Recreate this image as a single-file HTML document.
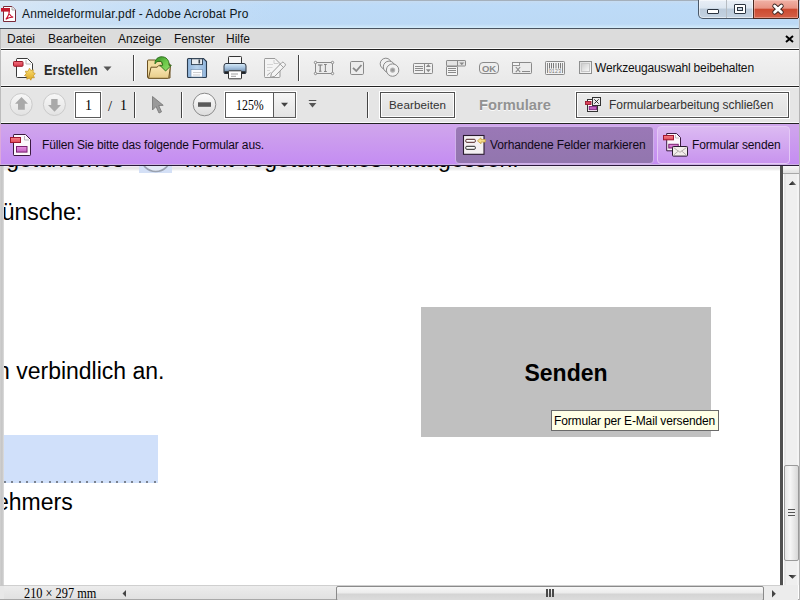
<!DOCTYPE html>
<html><head><meta charset="utf-8">
<style>
*{margin:0;padding:0;box-sizing:border-box}
html,body{width:800px;height:600px;overflow:hidden;background:#fff;font-family:"Liberation Sans",sans-serif}
.a{position:absolute}
svg.a{overflow:visible}
#title{left:0;top:0;width:800px;height:29px;background:linear-gradient(90deg,rgba(232,238,244,0.6) 0%,rgba(232,238,244,0.25) 15%,rgba(232,238,244,0) 35%),linear-gradient(#c6dcf2 0px,#bddbf8 4px,#bcd9f5 23px,#d4ecfb 27px,#c0d8ee 28px);border-top:1px solid #a4b0bc}
#titletxt{left:22px;top:7px;font-size:12px;color:#101820;letter-spacing:0.13px;white-space:nowrap}
#menu{left:0;top:28px;width:800px;height:22px;background:#dcdcdc;border-top:1px solid #4a5460;border-bottom:1px solid #222;box-shadow:inset 0 -1px 0 #fafafa}
.mi{top:32px;font-size:12px;color:#111;white-space:nowrap}
#tb1{left:0;top:50px;width:800px;height:37px;background:linear-gradient(#f2f2f2,#e8e8e8);border-top:1px solid #fcfcfc;border-bottom:1px solid #222;box-shadow:inset 0 -1px 0 #fafafa}
#tb2{left:0;top:87px;width:800px;height:37px;background:#e5e5e5;border-top:1px solid #fafafa;border-bottom:1px solid #222;box-shadow:inset 0 -1px 0 #fafafa}
.sep{width:2px;background:#444;border-right:1px solid #fff}
#purple{left:0;top:124px;width:800px;height:42px;background:linear-gradient(#d0a6ec,#c48cf2);border-bottom:1px solid #2a1a3a}
#doc{left:0;top:166px;width:780px;height:419px;background:linear-gradient(#f2eaf4 0 1px,#e8e8e8 1px 3px,#eeeeee 3px 4px,#f8f8f8 4px 5px,#fff 5px);overflow:hidden}
.dt{font-size:23px;color:#000;white-space:nowrap;line-height:23px}
#status{left:0;top:585px;width:783px;height:15px;background:#e8e8e8;border-top:1px solid #c8c8c8}
.ui{font-size:12px;color:#111;white-space:nowrap;line-height:14px}
</style></head><body>

<!-- Doc -->
<div id="doc" class="a"></div>
<!-- top line partly hidden -->
<div class="a dt" style="left:-18px;top:148px">vegetarisches</div>
<div class="a" style="left:139px;top:139px;width:33px;height:34px;background:#d4e0f6"></div>
<svg class="a" style="left:139px;top:139px" width="33" height="34" viewBox="139 139 33 34"><circle cx="155.8" cy="156.5" r="15" fill="#e2e9f6" stroke="#9aa2b0" stroke-width="1.6"/></svg>
<div class="a dt" style="left:185px;top:148px">nicht vegetarisches Mittagessen.</div>
<div class="a dt" style="left:-20px;top:201px">Wünsche:</div>
<div class="a dt" style="left:-3px;top:360px">n verbindlich an.</div>
<div class="a" style="left:4px;top:435px;width:154px;height:48px;background:#d0e0fa"></div><div class="a" style="left:4px;top:481px;width:154px;height:2px;background:repeating-linear-gradient(90deg,#7a8290 0 2px,transparent 2px 7.5px)"></div>
<div class="a dt" style="left:-4px;top:491px">ehmers</div>
<!-- Senden button -->
<div class="a" style="left:421px;top:307px;width:290px;height:130px;background:#c0c0c0"></div>
<div class="a" style="left:421px;top:361px;width:290px;text-align:center;font-size:23px;font-weight:bold;line-height:24px;color:#000">Senden</div>
<!-- tooltip -->
<div class="a" style="left:551px;top:410px;width:168px;height:21px;background:#ffffe6;border:1px solid #6a6a6a"></div>
<div class="a ui" style="left:554px;top:414px;letter-spacing:-0.15px;color:#000">Formular per E-Mail versenden</div>
<!-- left grey strip -->
<div class="a" style="left:0;top:165px;width:4px;height:435px;background:linear-gradient(90deg,#d0d0d0,#c4c4c4 50%,#dedede)"></div>
<!-- dark vertical line -->
<div class="a" style="left:780px;top:165px;width:3px;height:420px;background:#505050"></div>
<!-- vertical scrollbar -->
<div class="a" style="left:783px;top:165px;width:16px;height:420px;background:linear-gradient(90deg,#fff 0 1px,#e6e6e6 1px 3px,#efefef 3px 14px,#f4f4f4 14px)"></div>
<div class="a" style="left:783px;top:165px;width:16px;height:9px;background:linear-gradient(#fafafa,#e2e2e2);border-bottom:1px solid #a8a8a8"></div>
<svg class="a" style="left:788px;top:180px" width="9" height="6" viewBox="0 0 9 6"><defs><linearGradient id="garr" x1="0" y1="0" x2="1" y2="0"><stop offset="0" stop-color="#111"/><stop offset="1" stop-color="#777"/></linearGradient></defs><path d="M0.8 4.9 L4.5 1 L8.2 4.9 Z" fill="url(#garr)"/></svg>
<div class="a" style="left:784px;top:465px;width:15px;height:96px;border:1px solid #9a9a9a;border-radius:2px;background:linear-gradient(90deg,#e6e6e6,#f6f6f6 40%,#d8d8d8)"></div>
<div class="a" style="left:788px;top:509px;width:7px;height:8px;background:repeating-linear-gradient(#555 0 1px,#eee 1px 3px)"></div>
<svg class="a" style="left:788px;top:574px" width="9" height="6" viewBox="0 0 9 6"><path d="M0.5 1 L4.5 4.8 L8.5 1 Z" fill="url(#garr)"/></svg>


<!-- Title bar -->
<div id="title" class="a"></div>
<svg class="a" style="left:0;top:4px" width="20" height="20" viewBox="0 4 20 20">
  <path d="M3.5 6.5 H12 L15.5 10 V21.5 H3.5 Z" fill="#fff" stroke="#7a2a3a" stroke-width="1"/>
  <path d="M12 6.5 V10 H15.5" fill="#eee" stroke="#999" stroke-width="0.8"/>
  <rect x="1" y="8" width="9" height="3.6" fill="#c41a2e"/>
  <path d="M5.8 19.3 C8 17 9.6 13 9.2 11.4 C8.3 12.5 9.8 16 13.2 17.3 C10.5 16.8 7.5 18.2 5.8 19.3 Z" fill="none" stroke="#c8102e" stroke-width="1.1"/>
</svg>
<div id="titletxt" class="a">Anmeldeformular.pdf - Adobe Acrobat Pro</div>

<!-- window buttons -->
<div class="a" style="left:698px;top:0;width:56px;height:19px;border:1px solid #4a5868;border-top:none;border-radius:0 0 0 5px;background:linear-gradient(#e8eef6 0%,#dce6f0 45%,#bccbdb 50%,#c4d3e2 100%);box-shadow:inset 0 0 0 1px rgba(255,255,255,0.5)"></div>
<div class="a" style="left:726px;top:0;width:1px;height:18px;background:#4a5868;border-right:1px solid rgba(255,255,255,0.6)"></div>
<div class="a" style="left:753px;top:0;width:46px;height:19px;border:1px solid #4a2a22;border-top:none;background:linear-gradient(#f0b2a6 0%,#e89484 45%,#cc4a30 52%,#d46048 100%);box-shadow:inset 0 0 0 1px rgba(255,220,210,0.4)"></div>
<div class="a" style="left:707px;top:9px;width:12px;height:5px;background:#fff;border:1px solid #2a3440;border-radius:1px"></div>
<div class="a" style="left:734px;top:4px;width:12px;height:10px;border:1px solid #2a3440;background:#fff;border-radius:1px"></div>
<div class="a" style="left:737px;top:7px;width:6px;height:4px;border:1px solid #2a3440;background:#c8d4e0"></div>
<svg class="a" style="left:768px;top:1px" width="18" height="16" viewBox="768 1 18 16">
  <path d="M774.6 6 L781.4 12.2 M781.4 6 L774.6 12.2" stroke="#3a2420" stroke-width="4.6" stroke-linecap="round"/>
  <path d="M774.6 6 L781.4 12.2 M781.4 6 L774.6 12.2" stroke="#fff" stroke-width="2.8" stroke-linecap="round"/>
</svg>
<!-- Menu -->
<div id="menu" class="a"></div>
<div class="a mi" style="left:7px">Datei</div>
<div class="a mi" style="left:48px">Bearbeiten</div>
<div class="a mi" style="left:118px">Anzeige</div>
<div class="a mi" style="left:174px">Fenster</div>
<div class="a mi" style="left:226px">Hilfe</div>
<svg class="a" style="left:785px;top:35px" width="9" height="8" viewBox="0 0 9 8"><path d="M1 1 L8 7 M8 1 L1 7" stroke="#000" stroke-width="2"/></svg>

<!-- Toolbar 1 -->
<div id="tb1" class="a"></div>
<!-- Erstellen icon -->
<svg class="a" style="left:0;top:50px" width="40" height="36" viewBox="0 50 40 36">
  <defs>
    <linearGradient id="gstar" x1="0" y1="0" x2="0" y2="1"><stop offset="0" stop-color="#fbe27a"/><stop offset="1" stop-color="#e0a820"/></linearGradient>
    <linearGradient id="gred" x1="0" y1="0" x2="0" y2="1"><stop offset="0" stop-color="#f07080"/><stop offset="1" stop-color="#d83848"/></linearGradient>
  </defs>
  <path d="M17 58.5 H27.5 L32.5 63.5 V76.5 Q32.5 77.5 31.5 77.5 H17.5 Q16.5 77.5 16.5 76.5 V59.5 Q16.5 58.5 17.5 58.5 Z" fill="#fff" stroke="#3a3a3a" stroke-width="1"/>
  <path d="M26 60 V64 H31" fill="none" stroke="#aaa" stroke-width="0.8"/>
  <rect x="13.5" y="61.5" width="9.5" height="4.8" rx="0.8" fill="url(#gred)" stroke="#9a1828" stroke-width="1"/>
  <path d="M29.5 68.2 L30.8 70.5 L33.3 69.8 L33 72.4 L35.3 73.6 L33.4 75.4 L34.4 77.8 L31.8 77.8 L30.8 80.2 L29.3 78.1 L26.8 79.2 L26.9 76.6 L24.5 75.5 L26.3 73.7 L25.4 71.2 L28 71.3 Z" fill="url(#gstar)" stroke="#c09020" stroke-width="0.7"/>
</svg>
<div class="a" style="left:44px;top:63px;font-size:14px;font-weight:bold;color:#2a2a2a;line-height:14px;transform:scaleX(0.91);transform-origin:0 0">Erstellen</div>
<svg class="a" style="left:103px;top:66px" width="9" height="6" viewBox="0 0 9 6"><path d="M0.5 0.5 H8.5 L4.5 5 Z" fill="#555"/></svg>
<div class="a sep" style="left:133px;top:55px;height:26px"></div>

<!-- Open folder -->
<svg class="a" style="left:140px;top:50px" width="40" height="36" viewBox="140 50 40 36">
  <defs>
    <linearGradient id="gfold" x1="0" y1="0" x2="0" y2="1"><stop offset="0" stop-color="#fbe9b8"/><stop offset="1" stop-color="#e8cd8a"/></linearGradient>
    <linearGradient id="ggreen" x1="0" y1="0" x2="1" y2="1"><stop offset="0" stop-color="#2e8a22"/><stop offset="0.5" stop-color="#6cc848"/><stop offset="1" stop-color="#9ae070"/></linearGradient>
  </defs>
  <path d="M147.5 61 Q147.5 60 148.5 60 H155 L157 61.5 H162 V64 H170 V78 H148.5 Q147.5 78 147.5 77 Z" fill="#f2dca0" stroke="#6a5020" stroke-width="1"/>
  <path d="M151 67.2 H157 L158.5 65.8 H170.5 L168.8 77.5 Q168.6 78.3 167.8 78.3 H148.5 Z" fill="url(#gfold)" stroke="#6a5020" stroke-width="1"/>
  <path d="M155 63.8 C154.5 57.5 161.5 55 166 58 C168.5 60 169.3 62.5 169 65.3 L171.3 65.3 L165.6 71 L159.8 65.3 L162.6 65.3 C162.8 62.5 161.5 61 159 61.2 C157.2 61.4 155.8 62.4 155 63.8 Z" fill="url(#ggreen)" stroke="#2a6a1a" stroke-width="0.9"/>
</svg>

<!-- Save -->
<svg class="a" style="left:180px;top:50px" width="36" height="36" viewBox="180 50 36 36">
  <defs><linearGradient id="gsave" x1="0" y1="0" x2="1" y2="0"><stop offset="0" stop-color="#8eb4dc"/><stop offset="0.5" stop-color="#b8d2ec"/><stop offset="1" stop-color="#8eb4dc"/></linearGradient></defs>
  <path d="M188.5 58.5 H203.5 L206.5 61.5 V76.5 Q206.5 77.5 205.5 77.5 H188.5 Q187.5 77.5 187.5 76.5 V59.5 Q187.5 58.5 188.5 58.5 Z" fill="url(#gsave)" stroke="#2c3c4e" stroke-width="1.1"/>
  <rect x="191.5" y="58.8" width="11" height="5.8" fill="#e8ecf0" stroke="#2c3c4e" stroke-width="0.9"/>
  <rect x="198.5" y="59.5" width="1.6" height="4" fill="#3a4450"/>
  <rect x="191" y="69.5" width="11.5" height="7.5" fill="#fafcff" stroke="#6a88a8" stroke-width="0.6"/>
  <path d="M193 72.5 H201 M193 75 H200" stroke="#bbb" stroke-width="0.7"/>
</svg>

<!-- Print -->
<svg class="a" style="left:216px;top:50px" width="36" height="36" viewBox="216 50 36 36">
  <defs><linearGradient id="gprn" x1="0" y1="0" x2="0" y2="1"><stop offset="0" stop-color="#d8ecf8"/><stop offset="0.4" stop-color="#a8c4e0"/><stop offset="1" stop-color="#5a7a9a"/></linearGradient></defs>
  <rect x="228.5" y="56.5" width="13" height="9" rx="0.8" fill="#f6f6f6" stroke="#333" stroke-width="1"/>
  <path d="M226 63.5 H244 Q246 63.5 246 66 V72.5 Q246 73.5 245 73.5 H225 Q224 73.5 224 72.5 V66 Q224 63.5 226 63.5 Z" fill="url(#gprn)" stroke="#2c3440" stroke-width="1"/>
  <rect x="224.5" y="71.3" width="21" height="2" fill="#222"/>
  <rect x="228.5" y="70.8" width="13" height="8" rx="0.6" fill="#fff" stroke="#333" stroke-width="1"/>
  <path d="M231 74 H238 M231 76.3 H236" stroke="#777" stroke-width="0.7"/>
</svg>

<!-- Sign (disabled) -->
<svg class="a" style="left:258px;top:50px" width="32" height="36" viewBox="258 50 32 36">
  <path d="M265 58.5 H275 L280 63.5 V76.5 Q280 77.5 279 77.5 H265 Q264.5 77.5 264.5 76.5 V59.5 Q264.5 58.5 265 58.5 Z" fill="#f4f4f4" stroke="#9a9a9a" stroke-width="1"/>
  <path d="M274 60 V63.5 H278.5" fill="none" stroke="#bbb" stroke-width="0.7"/>
  <path d="M267 64.5 H273 M267 67.5 H272.5 M267 70.5 H270" stroke="#c8c8c8" stroke-width="0.7"/>
  <path d="M271.5 73.2 L281.8 62.6 Q282.8 61.6 283.8 62.6 L285 63.8 Q286 64.8 285 65.8 L274.7 76.4 L270.6 77.3 Z" fill="#f4f4f4" stroke="#999" stroke-width="1"/>
  <path d="M280.2 64.2 L283.4 67.4" stroke="#999" stroke-width="0.9"/>
  <path d="M267 75.5 L270.5 72.5" stroke="#9a9a9a" stroke-width="0.9"/>
</svg>
<div class="a sep" style="left:298px;top:55px;height:26px"></div>

<!-- form field tools (grey) -->
<svg class="a" style="left:305px;top:50px" width="270" height="36" viewBox="305 50 270 36">
  <g stroke="#8a8a8a" fill="none" stroke-width="1">
    <!-- text field -->
    <rect x="315.5" y="62.5" width="17" height="11" fill="#ececec"/>
    <circle cx="315.5" cy="62.5" r="1.2" fill="#f4f4f4"/><circle cx="332.5" cy="62.5" r="1.2" fill="#f4f4f4"/>
    <circle cx="315.5" cy="73.5" r="1.2" fill="#f4f4f4"/><circle cx="332.5" cy="73.5" r="1.2" fill="#f4f4f4"/>
    <path d="M318 65 H322.5 M320.2 65 V71.3 M319 71.3 H321.5" stroke="#7a7a7a" stroke-width="1.1"/>
    <path d="M324 64.5 H326.8 M325.4 64.5 V71.5 M324 71.5 H326.8" stroke="#7a7a7a" stroke-width="0.9"/>
    <!-- checkbox -->
    <rect x="350.5" y="61.5" width="13" height="13" rx="1.2" fill="#ededed"/>
    <path d="M353 67.8 L356.3 71 L361.5 65" stroke="#8a8a8a" stroke-width="1.8"/>
    <!-- radio -->
    <circle cx="385.8" cy="63.8" r="5.6" fill="#f0f0f0"/>
    <circle cx="389.1" cy="66.9" r="5.8" fill="#f0f0f0"/>
    <circle cx="392.6" cy="70.1" r="6.2" fill="#f2f2f2"/>
    <circle cx="392.6" cy="70.1" r="2.6" fill="#b4b4b4" stroke="none"/>
    <circle cx="392.6" cy="70.1" r="1.5" fill="#999" stroke="none"/>
    <!-- list box -->
    <rect x="413.5" y="63.5" width="19" height="10" rx="0.8" fill="#f0f0f0"/>
    <path d="M424.5 63.5 V73.5"/>
    <path d="M415 66.5 H423 M415 68.5 H423 M415 70.5 H423" stroke-width="1"/>
    <path d="M425.8 67 L428.3 64 L430.8 67 Z M425.8 69.3 L428.3 72.3 L430.8 69.3 Z" fill="#8a8a8a" stroke="none"/>
    <!-- combo -->
    <rect x="446.5" y="60.5" width="19" height="5.5" rx="0.6" fill="#e4e4e4"/>
    <path d="M457.5 60.5 V66"/>
    <path d="M459.3 62.5 H464.3 L461.8 65.3 Z" fill="#8a8a8a" stroke="none"/>
    <rect x="446.5" y="66.5" width="11" height="9" rx="0.6" fill="#f4f4f4"/>
    <path d="M448 68.5 H456 M448 70.5 H456 M448 72.5 H456" stroke-width="1"/>
    <!-- OK button -->
    <rect x="479.5" y="62.5" width="19" height="11" rx="3.5" fill="#eeeeee"/>
    <!-- signature -->
    <rect x="512.5" y="62.5" width="19" height="11" rx="0.8" fill="#ececec"/>
    <rect x="512.5" y="62.5" width="7" height="3" fill="#f6f6f6" stroke-width="0.9"/>
    <path d="M515.8 67 L520.2 72.2 M520.2 67 L515.8 72.2" stroke-width="1.1"/>
    <path d="M522 71.5 H530" stroke-width="1"/>
    <!-- barcode -->
    <rect x="545.5" y="61.5" width="19" height="13" rx="0.8" fill="#f2f2f2"/>
    <path d="M547.5 63 V73 M562.5 63 V73" stroke-width="1"/>
    <path d="M549.5 63 V68.5 M551.5 63 V68.5 M553.5 63 V68.5 M556 63 V68.5 M558.5 63 V68.5 M560.5 63 V68.5" stroke-width="1" stroke="#7a7a7a"/>
  </g>
  <text x="489" y="71.8" text-anchor="middle" font-family="Liberation Sans" font-weight="bold" font-size="9.5" fill="#8a8a8a">OK</text>
  <text x="555" y="73" text-anchor="middle" font-family="Liberation Sans" font-size="5.2" fill="#777" letter-spacing="0.3">0123</text>
</svg>
<!-- checkbox keep -->
<div class="a" style="left:579px;top:61px;width:13px;height:13px;border:1px solid #8e8f8f;background:linear-gradient(135deg,#dcdcdc,#fafafa)"></div>
<div class="a" style="left:581px;top:63px;width:9px;height:9px;border:1px solid #c8c8c8;background:linear-gradient(135deg,#cfcfcf,#f6f6f6)"></div>
<div class="a ui" style="left:595px;top:61px;letter-spacing:-0.16px">Werkzeugauswahl beibehalten</div>


<!-- Toolbar 2 -->
<div id="tb2" class="a"></div>
<svg class="a" style="left:0;top:87px" width="330" height="37" viewBox="0 87 330 37">
  <defs>
    <linearGradient id="gcirc" x1="0" y1="0" x2="0" y2="1"><stop offset="0" stop-color="#f8f8f8"/><stop offset="1" stop-color="#e2e2e2"/></linearGradient>
    <linearGradient id="gcirc2" x1="0" y1="0" x2="0" y2="1"><stop offset="0" stop-color="#fdfdfd"/><stop offset="1" stop-color="#dcdcdc"/></linearGradient>
  </defs>
  <!-- up -->
  <circle cx="21.2" cy="104.5" r="11" fill="url(#gcirc)" stroke="#cacaca" stroke-width="1"/>
  <path d="M21.5 97 L28 103.8 H24.8 V109.8 H18 V103.8 H15 Z" fill="#a9a9a9"/>
  <!-- down -->
  <circle cx="54.4" cy="104.5" r="11" fill="url(#gcirc)" stroke="#cacaca" stroke-width="1"/>
  <path d="M51.2 99 H57.6 V105 H61 L54.5 111.8 L48 105 H51.2 Z" fill="#a9a9a9"/>
  <!-- arrow cursor -->
  <path d="M152.5 96.5 L152.5 110 L156 106.5 L159 113 L161.5 111.8 L158.7 105.5 L163.2 105.3 Z" fill="#9a9a9a" stroke="#7a7a7a" stroke-width="0.9" stroke-linejoin="round"/>
  <!-- zoom out -->
  <circle cx="204.5" cy="104.5" r="11.3" fill="url(#gcirc2)" stroke="#8a8a8a" stroke-width="1"/>
  <rect x="198" y="102.3" width="13" height="4.5" fill="#5a5a5a"/>
  <!-- toolbar menu -->
  <path d="M308.8 100.5 H316.3" stroke="#555" stroke-width="1"/>
  <path d="M308.8 103 H316.3 L312.5 107.5 Z" fill="#555"/>
</svg>
<!-- page box -->
<div class="a" style="left:74px;top:91px;width:28px;height:28px;border:1px solid #fff"></div>
<div class="a" style="left:75px;top:92px;width:26px;height:26px;border:1px solid #5a5a5a;background:#fff"></div>
<div class="a" style="left:85px;top:98px;font-family:'Liberation Serif',serif;font-size:14px;line-height:16px;color:#000">1</div>
<div class="a" style="left:108px;top:98px;font-family:'Liberation Serif',serif;font-size:14.5px;line-height:16px;color:#000">/</div>
<div class="a" style="left:120px;top:98px;font-family:'Liberation Serif',serif;font-size:14px;line-height:16px;color:#000">1</div>
<div class="a sep" style="left:134px;top:92px;height:26px"></div>
<div class="a sep" style="left:181px;top:92px;height:26px"></div>
<!-- zoom box -->
<div class="a" style="left:224px;top:91px;width:73px;height:28px;border:1px solid #fff"></div>
<div class="a" style="left:225px;top:92px;width:71px;height:26px;border:1px solid #5a5a5a;background:#fff"></div>
<div class="a" style="left:273px;top:93px;width:22px;height:24px;border-left:1px solid #5a5a5a;background:linear-gradient(#f6f6f6,#e4e4e4)"></div>
<svg class="a" style="left:280px;top:102px" width="9" height="6" viewBox="0 0 9 6"><path d="M1 0.8 H8 L4.5 4.8 Z" fill="#444"/></svg>
<div class="a" style="left:236px;top:97px;font-family:'Liberation Serif',serif;font-size:14.5px;line-height:16px;color:#000;transform:scaleX(0.82);transform-origin:0 0">125%</div>
<div class="a sep" style="left:367px;top:92px;height:26px"></div>
<!-- Bearbeiten -->
<div class="a" style="left:379px;top:91px;width:77px;height:28px;border:1px solid #fff"></div>
<div class="a" style="left:380px;top:92px;width:75px;height:26px;border:1px solid #505050;background:linear-gradient(#ececec,#e0e0e0);box-shadow:inset 0 0 0 1px #fcfcfc"></div>
<div class="a ui" style="left:389px;top:98px;font-size:11.6px;letter-spacing:0.1px;color:#333">Bearbeiten</div>
<div class="a" style="left:479px;top:96px;font-size:15px;font-weight:bold;color:#929292;white-space:nowrap;line-height:17px;text-shadow:0 1px 0 #fafafa;transform:scaleX(0.98);transform-origin:0 0">Formulare</div>
<!-- Formularbearbeitung schließen -->
<div class="a" style="left:575px;top:91px;width:215px;height:28px;border:1px solid #fff"></div>
<div class="a" style="left:576px;top:92px;width:213px;height:26px;border:1px solid #505050;background:linear-gradient(#ececec,#e0e0e0);box-shadow:inset 0 0 0 1px #fcfcfc"></div>
<svg class="a" style="left:580px;top:92px" width="26" height="24" viewBox="580 92 26 24">
  <rect x="587.5" y="99.5" width="10" height="12" fill="#fff" stroke="#333" stroke-width="1"/>
  <rect x="585.5" y="101.5" width="5.5" height="3" fill="#d8405a" stroke="#9a1a30" stroke-width="0.9"/>
  <rect x="589.2" y="106.5" width="7.3" height="3.2" fill="#c060c0" stroke="#7a207a" stroke-width="0.9"/>
  <rect x="592.5" y="97.5" width="8" height="8" fill="#ececec" stroke="#333" stroke-width="1"/>
  <path d="M594.3 99.3 L598.7 103.7 M598.7 99.3 L594.3 103.7" stroke="#222" stroke-width="0.9"/>
</svg>
<div class="a ui" style="left:609px;top:98px;letter-spacing:-0.06px;color:#333">Formularbearbeitung schließen</div>


<!-- Purple -->
<div id="purple" class="a"></div><div class="a" style="left:0;top:164px;width:800px;height:1px;background:#ccb0e4"></div>
<svg class="a" style="left:5px;top:128px" width="32" height="32" viewBox="5 128 32 32">
  <defs>
    <linearGradient id="gpred" x1="0" y1="0" x2="0" y2="1"><stop offset="0" stop-color="#f88088"/><stop offset="1" stop-color="#e04858"/></linearGradient>
    <linearGradient id="gpmag" x1="0" y1="0" x2="0" y2="1"><stop offset="0" stop-color="#e890e0"/><stop offset="1" stop-color="#c060c0"/></linearGradient>
  </defs>
  <path d="M14 134.5 H25.5 L30.5 139.5 V154.8 Q30.5 155.5 29.8 155.5 H14 Q13.5 155.5 13.5 154.8 V135.2 Q13.5 134.5 14 134.5 Z" fill="#fbf6fb" stroke="#3a1a40" stroke-width="1"/>
  <path d="M24.5 136 V140 H29" fill="none" stroke="#aaa" stroke-width="0.8"/>
  <rect x="10.5" y="137.5" width="10" height="5" fill="url(#gpred)" stroke="#a01830" stroke-width="1"/>
  <rect x="16.5" y="146.5" width="10.5" height="5.6" fill="url(#gpmag)" stroke="#7a2070" stroke-width="1"/>
</svg>
<div class="a ui" style="left:42px;top:138px;letter-spacing:-0.16px;color:#100818">Füllen Sie bitte das folgende Formular aus.</div>
<!-- Vorhandene Felder markieren (pressed) -->
<div class="a" style="left:455px;top:126px;width:199px;height:38px;border-radius:4px;background:linear-gradient(#9a78b6,#9276ae);border:1px solid #cfb0ea"></div>
<svg class="a" style="left:458px;top:130px" width="32" height="30" viewBox="458 130 32 30">
  <rect x="463.5" y="135.5" width="20.5" height="18.8" fill="#f4f0f2" stroke="#2a1a30" stroke-width="1.1"/>
  <rect x="465.8" y="139.3" width="9.5" height="3" rx="1" fill="#fff" stroke="#4a2020" stroke-width="1"/>
  <rect x="465.8" y="146.3" width="9.5" height="3" rx="1" fill="#fff" stroke="#222" stroke-width="1"/>
  <path d="M477.5 140.8 L481 137.8 V139.6 H485.3 V142 H481 V143.8 Z" fill="#f8e090" stroke="#c8a040" stroke-width="0.8"/>
</svg>
<div class="a ui" style="left:490px;top:138px;letter-spacing:-0.12px;color:#100818">Vorhandene Felder markieren</div>
<!-- Formular senden -->
<div class="a" style="left:657px;top:126px;width:133px;height:38px;border-radius:4px;background:linear-gradient(#dcbaf2,#c894ee);border:1px solid #e4c8f6"></div>
<svg class="a" style="left:658px;top:128px" width="34" height="34" viewBox="658 128 34 34">
  <path d="M666.7 133.5 H676.5 L680.5 137.5 V150.8 H666.7 Z" fill="#fbf6fb" stroke="#3a1a40" stroke-width="1"/>
  <path d="M675.5 134.8 V138 H679" fill="none" stroke="#aaa" stroke-width="0.7"/>
  <rect x="663.5" y="135.5" width="10" height="4.3" fill="url(#gpred)" stroke="#a01830" stroke-width="1"/>
  <rect x="668.8" y="144.3" width="9.4" height="3.7" fill="url(#gpmag)" stroke="#7a2070" stroke-width="1"/>
  <rect x="672.5" y="146.5" width="15" height="9.6" rx="0.8" fill="#f2eeea" stroke="#2a1a30" stroke-width="1"/>
  <path d="M673.5 147.5 L680 152.3 L686.5 147.5 M673.5 155.2 L678.3 151 M686.5 155.2 L681.7 151" fill="none" stroke="#9a9090" stroke-width="0.7"/>
</svg>
<div class="a ui" style="left:692px;top:138px;letter-spacing:-0.15px;color:#100818">Formular senden</div>


<!-- status -->
<div id="status" class="a"></div>
<div class="a" style="left:4px;top:585px;width:779px;height:15px;background:linear-gradient(#ececec,#e0e0e0);border-top:1px solid #cfcfcf"></div><div class="a" style="left:0;top:599px;width:800px;height:1px;background:#a8a8a8"></div>
<div class="a" style="left:24px;top:586px;font-family:'Liberation Serif',serif;font-size:14px;line-height:16px;color:#000;white-space:nowrap;transform:scaleX(0.88);transform-origin:0 0">210 × 297 mm</div>
<svg class="a" style="left:121px;top:589px" width="6" height="9" viewBox="0 0 6 9"><path d="M5 1 L1.5 4.5 L5 8 Z" fill="#444"/></svg>
<div class="a" style="left:336px;top:586px;width:428px;height:15px;border:1px solid #8a8a8a;border-radius:2px;background:linear-gradient(#f8f8f8,#ececec 45%,#d4d4d4 55%,#dcdcdc)"></div>
<div class="a" style="left:546px;top:589px;width:8px;height:8px;background:repeating-linear-gradient(90deg,#4a4a4a 0 2px,transparent 2px 3px)"></div>
<div class="a" style="left:764px;top:586px;width:19px;height:14px;background:#ececec"></div>
<svg class="a" style="left:771px;top:589px" width="6" height="9" viewBox="0 0 6 9"><path d="M1 1 L4.8 4.8 L1 8.5 Z" fill="#444"/></svg>
<div class="a" style="left:783px;top:585px;width:15px;height:15px;background:#ececec"></div>
<!-- right window frame -->
<div class="a" style="left:799px;top:18px;width:1px;height:582px;background:#b4b4b4"></div><div class="a" style="left:798px;top:18px;width:1px;height:10px;background:#c8dcf0"></div>
<div class="a" style="left:0;top:29px;width:1px;height:95px;background:#bcbcbc"></div><div class="a" style="left:0;top:124px;width:1px;height:41px;background:#dca8dc"></div>

</body></html>
